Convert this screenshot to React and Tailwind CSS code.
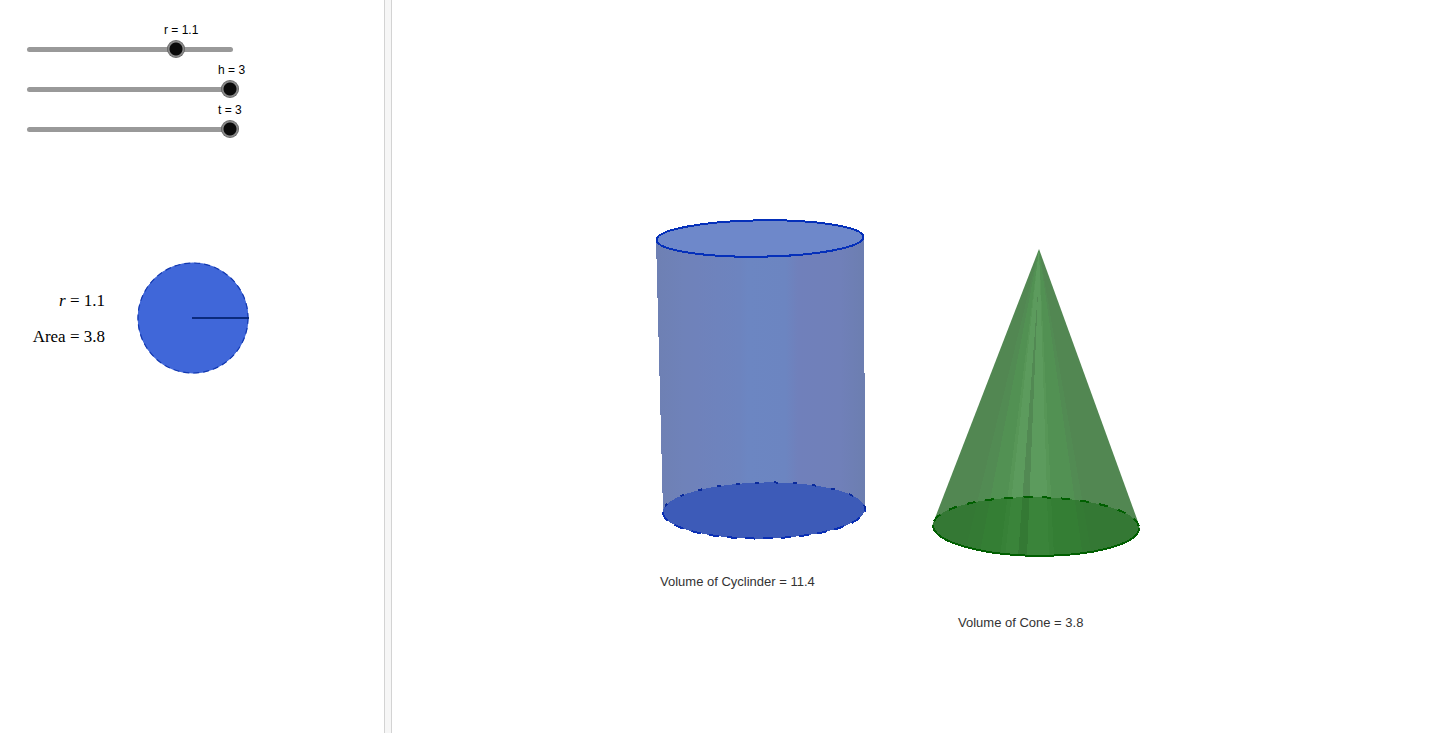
import { useState } from "react";

const TRAVEL = 202;

function Slider({ name, value, max, step, onChange }) {
  const labelOffset = Math.round((value / max) * TRAVEL) - 3;
  return (
    <div className="flex flex-col">
      <label
        htmlFor={`slider-${name}`}
        className="whitespace-nowrap text-[12px] leading-4 text-black"
        style={{ paddingLeft: labelOffset }}
      >
        {name} = {value}
      </label>
      <div className="grid h-6 w-[220px] items-center pb-0.5">
        <span className="ml-2 mr-1.5 h-[5px] rounded-full bg-[#999999] [grid-area:1/1]" />
        <input
          id={`slider-${name}`}
          type="range"
          min="0"
          max={max}
          step={step}
          value={value}
          onChange={(e) => onChange(Number(e.target.value))}
          className="h-[18px] w-full cursor-pointer appearance-none bg-transparent [grid-area:1/1] [&::-webkit-slider-thumb]:size-[18px] [&::-webkit-slider-thumb]:appearance-none [&::-webkit-slider-thumb]:rounded-full [&::-webkit-slider-thumb]:bg-[radial-gradient(circle_closest-side,#0a0a0a_0_6px,#8c8c8c_7px,#808080_8px,#505050_9px)]"
        />
      </div>
    </div>
  );
}

function AreaCircle() {
  return (
    <svg width="114" height="114" viewBox="136 261 114 114" role="img" aria-label="Circle">
      <circle cx="193" cy="318" r="55" fill="#4067d9" stroke="#4067d9" />
      <circle cx="193" cy="318" r="55" fill="none" stroke="#1238b0" strokeWidth="1.2" strokeDasharray="6 4" />
      <path d="M192 318H249" stroke="#0b2a7d" strokeWidth="2" />
    </svg>
  );
}

function Cylinder() {
  return (
    <svg
      width="212"
      height="323"
      viewBox="655 218 212 323"
      shapeRendering="crispEdges"
      role="img"
      aria-label="Cylinder"
    >
      <defs>
        <linearGradient id="cylinderSide" gradientUnits="userSpaceOnUse" x1="656" y1="0" x2="865" y2="0">
          <stop offset="0" stopColor="#6e80b3" />
          <stop offset="0.13" stopColor="#6f82b9" />
          <stop offset="0.2" stopColor="#6f82bb" />
          <stop offset="0.4" stopColor="#6d84bf" />
          <stop offset="0.44" stopColor="#6c86c2" />
          <stop offset="0.62" stopColor="#6c85c1" />
          <stop offset="0.68" stopColor="#7080bb" />
          <stop offset="0.88" stopColor="#7080b9" />
          <stop offset="1" stopColor="#6c7eb0" />
        </linearGradient>
      </defs>
      <path d="M656 239L663 512L764 520L865 508L864 237Z" fill="url(#cylinderSide)" />
      <g transform="rotate(-1 764 510.500)">
        <ellipse cx="764" cy="510.500" rx="101" ry="28" fill="#3d5bb8" />
        <path d="M663 510.500A101 28 0 0 1 865 510.500" fill="none" stroke="#0a2a9c" strokeWidth="2" strokeDasharray="4 15" strokeDashoffset="-6" />
        <path d="M663 510.500A101 28 0 0 0 865 510.500" fill="none" stroke="#0a2fb4" strokeWidth="2" strokeDasharray="10 8" />
      </g>
      <ellipse
        cx="760"
        cy="238.500"
        rx="103.500"
        ry="18.200"
        transform="rotate(-0.800 760 238.500)"
        fill="#6e88ca"
        stroke="#0530ba"
        strokeWidth="2"
      />
    </svg>
  );
}

function Cone() {
  return (
    <svg
      width="210"
      height="310"
      viewBox="932 248 210 310"
      shapeRendering="crispEdges"
      role="img"
      aria-label="Cone"
    >
      <defs>
        <clipPath id="coneShape">
          <path d="M1039 249L935 518L932.500 525A103.500 29.500 1 0 0 1139.500 528L1137 519Z" />
        </clipPath>
      </defs>
      <g clipPath="url(#coneShape)">
        <rect x="932" y="248" width="210" height="310" fill="#528752" />
        <path d="M1039 249L964 557H1092Z" fill="#528b53" />
        <path d="M1039 249L979 557H1083Z" fill="#529153" />
        <path d="M1039 249L1000 557H1054Z" fill="#579657" />
        <path d="M1039 249L1005 557H1049Z" fill="#5c9b5d" />
        <path d="M1038 290L1018 557H1027Z" fill="#528953" />
      </g>
      <g transform="rotate(0.800 1036 526.500)">
        <ellipse cx="1036" cy="526.500" rx="103" ry="29.300" fill="#086108" fillOpacity="0.400" />
        <path d="M933 526.500A103 29.300 0 0 1 1139 526.500" fill="none" stroke="#005f00" strokeWidth="2" strokeDasharray="9 10" strokeDashoffset="-4" />
        <path d="M933 526.500A103 29.300 0 0 0 1139 526.500" fill="none" stroke="#005f00" strokeWidth="2" />
      </g>
    </svg>
  );
}

export default function App() {
  const [r, setR] = useState(1.1);
  const [h, setH] = useState(3);
  const [t, setT] = useState(3);
  const area = Math.PI * r * r;

  return (
    <div className="h-screen bg-white pb-0.5 font-['Liberation_Sans',Arial,sans-serif]">
      <main className="flex h-full">
        <section className="w-96 shrink-0 pt-[22px]">
          <div className="flex flex-col pl-[19px]">
            <Slider name="r" value={r} max={1.5} step={0.1} onChange={setR} />
            <Slider name="h" value={h} max={3} step={0.1} onChange={setH} />
            <Slider name="t" value={t} max={3} step={0.1} onChange={setT} />
          </div>
          <div className="mt-[119px] flex items-center gap-[31px]">
            <div className="w-[105px] pt-0.5 text-right font-['Liberation_Serif',serif] text-[17px] leading-9 text-black">
              <p>
                <i>r</i> = {r}
              </p>
              <p>Area = {area.toFixed(1)}</p>
            </div>
            <AreaCircle />
          </div>
        </section>
        <div className="w-2 shrink-0 border-x border-[#d3d3d3] bg-[#f6f6f6]" />
        <section className="flex min-w-0 flex-1 items-start justify-center gap-[65px] pr-[35px] pt-[218px] text-[13px] leading-5 text-[#333333]">
          <figure className="shrink-0">
            <Cylinder />
            <figcaption className="pl-[5px] pt-[31px]">Volume of Cyclinder = {(area * h).toFixed(1)}</figcaption>
          </figure>
          <figure className="mt-[30px] shrink-0">
            <Cone />
            <figcaption className="pl-[26px] pt-[55px]">Volume of Cone = {((area * t) / 3).toFixed(1)}</figcaption>
          </figure>
        </section>
      </main>
    </div>
  );
}
